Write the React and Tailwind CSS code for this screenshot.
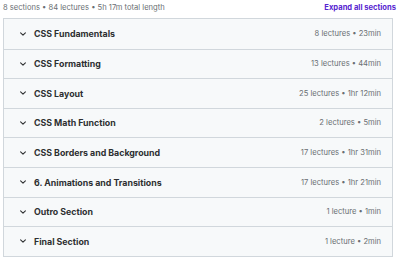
const SECCIONES = [
  { titulo: 'CSS Fundamentals', info: '8 lectures • 23min' },
  { titulo: 'CSS Formatting', info: '13 lectures • 44min' },
  { titulo: 'CSS Layout', info: '25 lectures • 1hr 12min' },
  { titulo: 'CSS Math Function', info: '2 lectures • 5min' },
  { titulo: 'CSS Borders and Background', info: '17 lectures • 1hr 31min' },
  { titulo: '6. Animations and Transitions', info: '17 lectures • 1hr 21min' },
  { titulo: 'Outro Section', info: '1 lecture • 1min' },
  { titulo: 'Final Section', info: '1 lecture • 2min' },
]

function Chevron() {
  return (
    <svg width="6" height="4" viewBox="0 0 10 6" fill="none" className="shrink-0">
      <path d="M1 1l4 4 4-4" stroke="#2d2f31" strokeWidth="1.8" strokeLinecap="round" strokeLinejoin="round" />
    </svg>
  )
}

export default function App() {
  return (
    <div className="w-[400px] h-[259px] bg-white font-['Inter',sans-serif] text-[#2d2f31] overflow-hidden">
      <div className="flex items-center justify-between pl-[3px] pr-[4px] h-[14px] pt-[1px]">
        <span className="text-[7.6px] text-[#6a6f73]">8 sections • 84 lectures • 5h 17m total length</span>
        <span className="text-[7.6px] font-bold text-[#5624d0]">Expand all sections</span>
      </div>
      <div className="mt-[4px] ml-[3px] w-[390px] border border-[#d1d7dc]">
        {SECCIONES.map((s, i) => (
          <div
            key={s.titulo}
            className={`flex items-center h-[29.6px] bg-[#f7f9fa] pl-[16px] pr-[11px] ${i > 0 ? 'border-t border-[#d1d7dc]' : ''}`}
          >
            <Chevron />
            <span className="ml-[8px] text-[8.8px] font-bold flex-1">{s.titulo}</span>
            <span className="text-[7.6px] text-[#6a6f73]">{s.info}</span>
          </div>
        ))}
      </div>
    </div>
  )
}
